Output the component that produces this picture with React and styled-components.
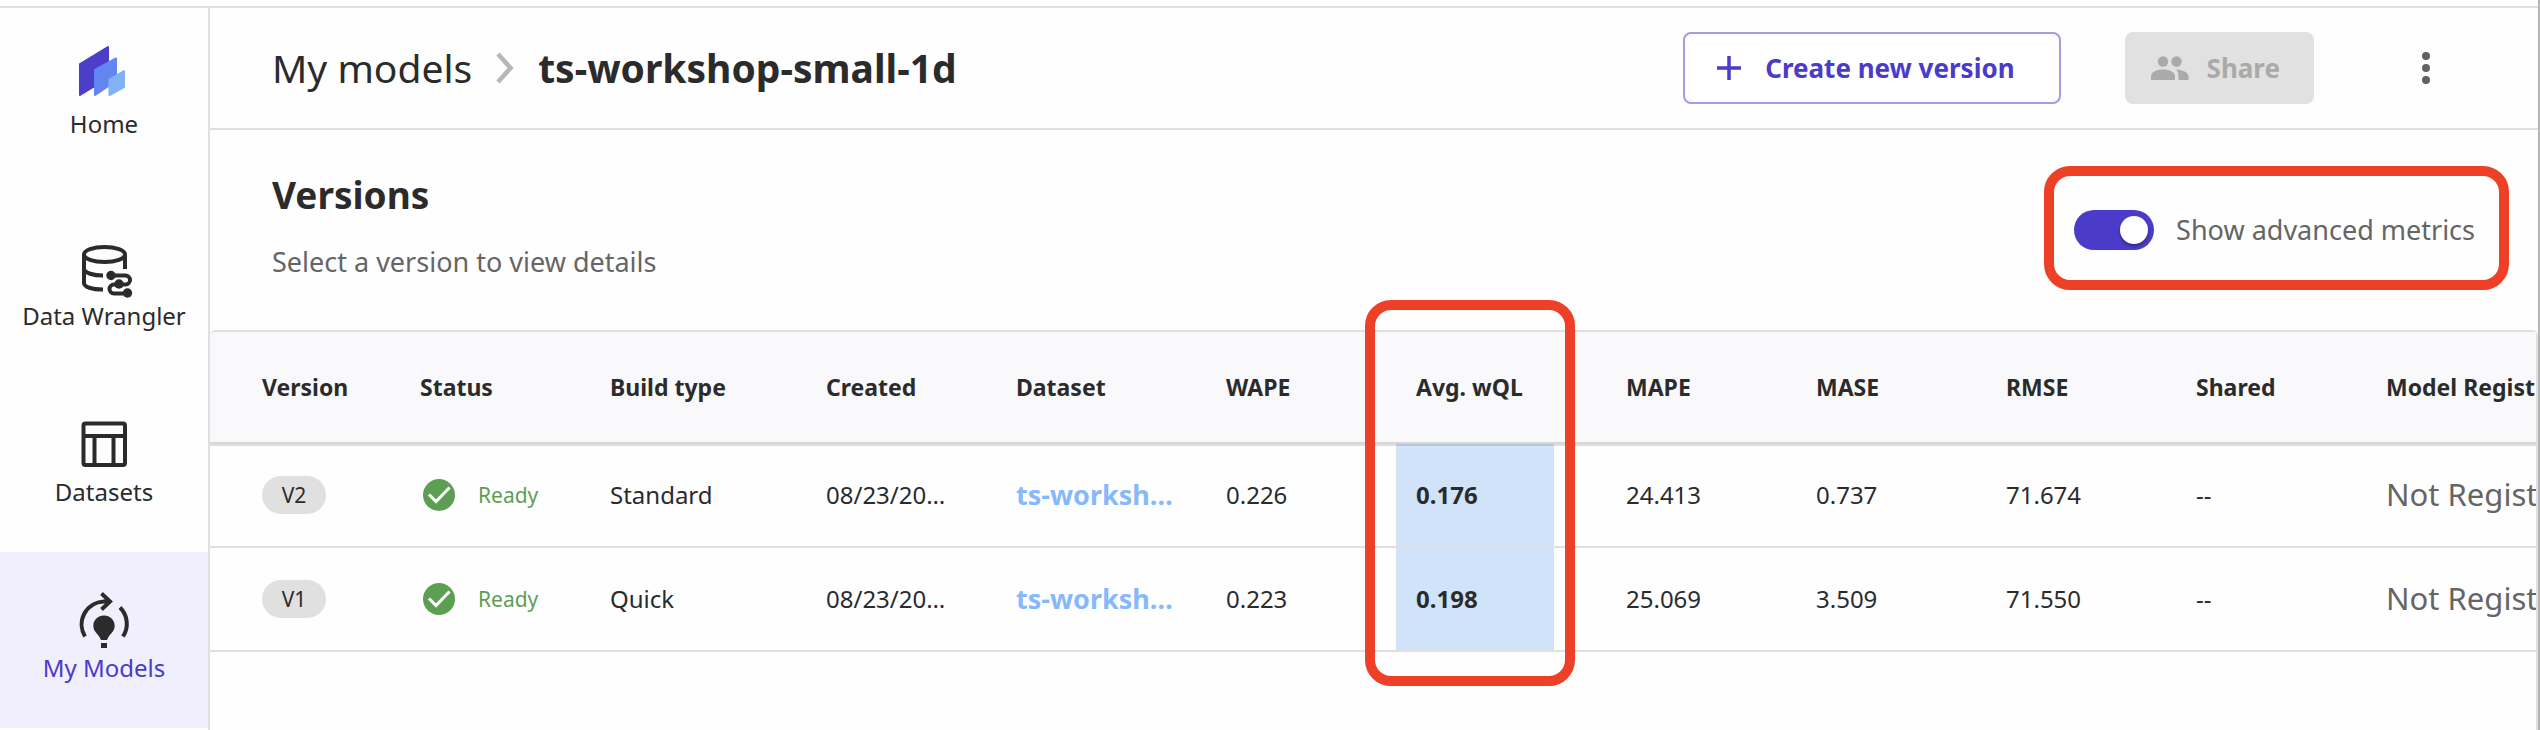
import React from "react";
import styled, { createGlobalStyle, css } from "styled-components";

const GlobalStyle = createGlobalStyle`
  *, *::before, *::after { box-sizing: border-box; }
  body {
    margin: 0;
    background: #fefefe;
    color: #2b2b2c;
    font-family: "Noto Sans", "Open Sans", sans-serif;
  }
`;

const Page = styled.div`
  display: flex;
  min-height: 100vh;
  padding-top: 6px;
  overflow-x: clip;
  border-right: 2px solid #b4b4b4;
`;

const Sidebar = styled.nav`
  flex: none;
  width: 210px;
  border-top: 2px solid #e0e0e0;
  border-right: 2px solid #e0e0e0;
`;

const NavItem = styled.a`
  display: flex;
  flex-direction: column;
  align-items: center;
  gap: 2px;
  height: 176px;
  padding-top: 38px;
  margin-bottom: ${(p) => (p.$spaced ? "16px" : "0")};
  background: ${(p) => (p.$active ? "#f1effb" : "transparent")};
  color: ${(p) => (p.$active ? "#4a3bc9" : "#2b2b2c")};
  font-size: 24px;
  line-height: 32px;
  text-decoration: none;
  white-space: nowrap;
`;

const NavIcon = styled.svg`
  width: 60px;
  height: 60px;
  color: #2b2b2c;
  fill: none;
  stroke: currentColor;
  stroke-width: 4;
`;

const Main = styled.main`
  flex: 1;
  min-width: 0;
  display: flex;
  flex-direction: column;
  border-top: 2px solid #e0e0e0;
`;

const Header = styled.header`
  display: flex;
  align-items: center;
  justify-content: space-between;
  height: 122px;
  padding: 0 88px 0 62px;
  border-bottom: 2px solid #e0e0e0;
`;

const Breadcrumb = styled.nav`
  display: flex;
  align-items: center;
  gap: 24px;
  font-size: 39px;
  line-height: 52px;
  white-space: nowrap;
`;

const CrumbLink = styled.a`
  color: inherit;
  text-decoration: none;
`;

const CrumbCurrent = styled.h1`
  margin: 0;
  font-size: 39px;
  line-height: 52px;
  font-weight: 700;
`;

const Actions = styled.div`
  display: flex;
  align-items: center;
`;

const Button = styled.button`
  display: flex;
  align-items: center;
  gap: 24px;
  height: 72px;
  padding: 0 44px 0 32px;
  border: 2px solid #a59be4;
  border-radius: 8px;
  background: #fff;
  color: #4a3bc9;
  font-family: inherit;
  font-size: 26px;
  font-weight: 700;
  line-height: 36px;
  white-space: nowrap;

  &:disabled {
    gap: 18px;
    margin-left: 64px;
    padding: 0 32px 0 24px;
    border-color: #e1e1e1;
    background: #e1e1e1;
    color: #aaa;
  }
`;

const MenuButton = styled.button`
  display: flex;
  align-items: center;
  justify-content: center;
  width: 48px;
  height: 48px;
  margin-left: 88px;
  padding: 0;
  border: 0;
  background: none;
  color: #626263;
`;

const VersionsBar = styled.section`
  display: flex;
  justify-content: space-between;
  padding: 36px 29px 40px 62px;
`;

const Intro = styled.div`
  padding-top: 4px;
`;

const SectionTitle = styled.h2`
  margin: 0 0 22px;
  font-size: 37px;
  line-height: 50px;
`;

const Hint = styled.p`
  margin: 0;
  color: #656566;
  font-size: 27px;
  line-height: 40px;
`;

const callout = css`
  border: 10px solid #ed4026;
  border-radius: 26px;
`;

const SwitchLabel = styled.label`
  ${callout}
  display: flex;
  align-items: center;
  gap: 22px;
  height: 124px;
  padding: 4px 24px 0 20px;
  color: #656566;
  font-size: 27px;
  line-height: 40px;
  white-space: nowrap;
`;

const Switch = styled.input`
  appearance: none;
  display: flex;
  align-items: center;
  width: 80px;
  height: 40px;
  margin: 0;
  padding: 0 6px;
  border-radius: 20px;
  background: #a9a9a9;

  &::before {
    content: "";
    width: 28px;
    height: 28px;
    border-radius: 50%;
    background: #fff;
    box-shadow: 0 2px 3px rgba(0, 0, 0, 0.35);
  }

  &:checked {
    justify-content: flex-end;
    background: #4a3bc9;
  }
`;

const TableArea = styled.div`
  flex: 1;
  overflow-x: clip;
  border-top: 2px solid #e0e0e0;
  border-right: 2px solid #e0e0e0;
  border-radius: 6px 6px 0 0;
`;

const Table = styled.table`
  width: 2416px;
  table-layout: fixed;
  border-collapse: separate;
  border-spacing: 0;
  font-size: 24px;
  line-height: 32px;
`;

const Col = styled.col`
  width: ${(p) => p.$width}px;
`;

const HeadCell = styled.th`
  position: relative;
  height: 112px;
  padding: 0 20px;
  border-bottom: 2px solid #d6d6d8;
  background: #f9f9fb;
  box-shadow: 0 2px 0 rgba(0, 0, 0, 0.12);
  font-size: 23px;
  font-weight: 700;
  text-align: left;
  white-space: nowrap;

  &:first-child {
    padding-left: 52px;
    border-top-left-radius: 6px;
  }
`;

const ColumnCallout = styled.span`
  ${callout}
  position: absolute;
  z-index: 1;
  top: -32px;
  left: -31px;
  width: 210px;
  height: 386px;
  pointer-events: none;
`;

const Cell = styled.td`
  height: 104px;
  padding: 0 20px;
  border-bottom: 2px solid #e0e0e0;
  white-space: nowrap;

  &:first-child {
    padding-left: 52px;
  }
`;

const MetricCell = styled(Cell)`
  padding: 0;
`;

const Highlight = styled.div`
  display: flex;
  align-items: center;
  width: 158px;
  height: 102px;
  padding-left: 20px;
  background: #d1e3f8;
  font-weight: 700;
`;

const Badge = styled.span`
  display: flex;
  align-items: center;
  justify-content: center;
  width: 64px;
  height: 38px;
  border-radius: 19px;
  background: #e0e0e0;
  font-size: 21px;
`;

const Status = styled.span`
  display: flex;
  align-items: center;
  gap: 20px;
  color: #5d9f52;
  font-size: 21px;
`;

const DatasetLink = styled.a`
  color: #86b9fb;
  font-size: 27px;
  font-weight: 700;
  text-decoration: none;
`;

const Registry = styled.span`
  color: #656566;
  font-size: 31px;
`;

const HomeIcon = () => (
  <NavIcon viewBox="0 0 60 60" aria-hidden="true">
    <g strokeWidth="2" strokeLinejoin="round">
      <path d="M6 18 34 1V32L6 49Z" fill="#4b3fc9" stroke="#4b3fc9" />
      <path d="M21 24 42 12.500V35L21 49Z" fill="#6286f1" stroke="#6286f1" />
      <path d="M35.500 33.500 50 25V41L35.500 49Z" fill="#82b1f8" stroke="#82b1f8" />
    </g>
  </NavIcon>
);

const WranglerIcon = () => (
  <NavIcon viewBox="0 0 60 60" aria-hidden="true">
    <ellipse cx="30.500" cy="16.500" rx="20.500" ry="7.500" />
    <path d="M10 16.500V45C10 49 18 51.500 29 51.500M10 31C11 35 19 37.500 29 37.500M51 16.500V31" />
    <path d="M37 37.500H51.500a4.500 4.500 0 0 1 0 9H40a4.500 4.500 0 0 0 0 9H53" />
    <g fill="currentColor" stroke="none">
      <circle cx="37" cy="37.500" r="4.700" />
      <circle cx="45" cy="46" r="4.700" />
      <circle cx="53.500" cy="55" r="4.700" />
    </g>
  </NavIcon>
);

const DatasetsIcon = () => (
  <NavIcon viewBox="0 0 60 60" aria-hidden="true">
    <rect x="9.500" y="9.500" width="41.500" height="41.500" rx="2" />
    <path d="M9 22H51M20.500 22V51M39.500 22V51" />
  </NavIcon>
);

const ModelsIcon = () => (
  <NavIcon viewBox="0 0 60 60" aria-hidden="true">
    <path d="M11 46.500A23 23 0 0 1 30 11.500H36M27.500 3.500 36 11.500 27.500 19.500M46 17.500A23 23 0 0 1 49 46.500" />
    <path
      d="M30 25.500c-6 0-10.700 4.700-10.700 10.300 0 6.200 5 7.700 7.700 14.200h6c2.700-6.500 7.700-8 7.700-14.200C40.700 30.200 36 25.500 30 25.500ZM27 53h6v5h-6Z"
      fill="currentColor"
      stroke="none"
    />
  </NavIcon>
);

const ChevronIcon = () => (
  <svg width="18" height="32" viewBox="0 0 18 32" aria-hidden="true">
    <path d="M2 2 14.500 16 2 30" fill="none" stroke="#b6b6b6" strokeWidth="4.500" />
  </svg>
);

const PlusIcon = () => (
  <svg width="24" height="24" viewBox="0 0 24 24" aria-hidden="true">
    <path d="M12 0V24M0 12H24" stroke="currentColor" strokeWidth="3.500" />
  </svg>
);

const PeopleIcon = () => (
  <svg width="38" height="24" viewBox="0 0 38 24" fill="currentColor" aria-hidden="true">
    <circle cx="12" cy="5.500" r="5.200" />
    <circle cx="25.500" cy="5.500" r="5.200" />
    <path d="M0 24V20.500C0 16 6 13.500 12 13.500S24 16 24 20.500V24Z" />
    <path d="M25 13.600C31 14 37.500 16 37.500 20.500V24H27.500V20.500C27.500 17.500 27 15.500 25 13.600Z" />
  </svg>
);

const DotsIcon = () => (
  <svg width="8" height="32" viewBox="0 0 8 32" fill="currentColor" aria-hidden="true">
    <circle cx="4" cy="4" r="4" />
    <circle cx="4" cy="16" r="4" />
    <circle cx="4" cy="28" r="4" />
  </svg>
);

const CheckIcon = () => (
  <svg width="38" height="32" viewBox="0 0 38 32" aria-hidden="true">
    <circle cx="19" cy="16" r="16" fill="#5d9f52" />
    <path d="M9 15.500 16 22.500 29.500 8.500" fill="none" stroke="#fff" strokeWidth="3" />
  </svg>
);

const navItems = [
  { label: "Home", Icon: HomeIcon, spaced: true },
  { label: "Data Wrangler", Icon: WranglerIcon },
  { label: "Datasets", Icon: DatasetsIcon },
  { label: "My Models", Icon: ModelsIcon, active: true },
];

const columns = [
  { title: "Version", width: 190 },
  { title: "Status", width: 190 },
  { title: "Build type", width: 216 },
  { title: "Created", width: 190 },
  { title: "Dataset", width: 210 },
  { title: "WAPE", width: 190 },
  { title: "Avg. wQL", width: 210, marked: true },
  { title: "MAPE", width: 190 },
  { title: "MASE", width: 190 },
  { title: "RMSE", width: 190 },
  { title: "Shared", width: 190 },
  { title: "Model Registry", width: 260 },
];

const versions = [
  { id: "V2", build: "Standard", wape: "0.226", wql: "0.176", mape: "24.413", mase: "0.737", rmse: "71.674" },
  { id: "V1", build: "Quick", wape: "0.223", wql: "0.198", mape: "25.069", mase: "3.509", rmse: "71.550" },
];

export default function App() {
  return (
    <>
      <GlobalStyle />
      <Page>
        <Sidebar aria-label="Main">
          {navItems.map(({ label, Icon, active, spaced }) => (
            <NavItem
              key={label}
              href="#"
              $active={active}
              $spaced={spaced}
              aria-current={active ? "page" : undefined}
            >
              <Icon />
              {label}
            </NavItem>
          ))}
        </Sidebar>
        <Main>
          <Header>
            <Breadcrumb aria-label="Breadcrumb">
              <CrumbLink href="#">My models</CrumbLink>
              <ChevronIcon />
              <CrumbCurrent>ts-workshop-small-1d</CrumbCurrent>
            </Breadcrumb>
            <Actions>
              <Button type="button">
                <PlusIcon />
                Create new version
              </Button>
              <Button type="button" disabled>
                <PeopleIcon />
                Share
              </Button>
              <MenuButton type="button" aria-label="More actions">
                <DotsIcon />
              </MenuButton>
            </Actions>
          </Header>
          <VersionsBar>
            <Intro>
              <SectionTitle>Versions</SectionTitle>
              <Hint>Select a version to view details</Hint>
            </Intro>
            <SwitchLabel>
              <Switch type="checkbox" role="switch" defaultChecked />
              Show advanced metrics
            </SwitchLabel>
          </VersionsBar>
          <TableArea>
            <Table>
              <colgroup>
                {columns.map((c) => (
                  <Col key={c.title} $width={c.width} />
                ))}
              </colgroup>
              <thead>
                <tr>
                  {columns.map((c) => (
                    <HeadCell key={c.title} scope="col">
                      {c.title}
                      {c.marked && <ColumnCallout />}
                    </HeadCell>
                  ))}
                </tr>
              </thead>
              <tbody>
                {versions.map((v) => (
                  <tr key={v.id}>
                    <Cell>
                      <Badge>{v.id}</Badge>
                    </Cell>
                    <Cell>
                      <Status>
                        <CheckIcon />
                        Ready
                      </Status>
                    </Cell>
                    <Cell>{v.build}</Cell>
                    <Cell>08/23/20…</Cell>
                    <Cell>
                      <DatasetLink href="#">ts-worksh…</DatasetLink>
                    </Cell>
                    <Cell>{v.wape}</Cell>
                    <MetricCell>
                      <Highlight>{v.wql}</Highlight>
                    </MetricCell>
                    <Cell>{v.mape}</Cell>
                    <Cell>{v.mase}</Cell>
                    <Cell>{v.rmse}</Cell>
                    <Cell>--</Cell>
                    <Cell>
                      <Registry>Not Registered</Registry>
                    </Cell>
                  </tr>
                ))}
              </tbody>
            </Table>
          </TableArea>
        </Main>
      </Page>
    </>
  );
}
